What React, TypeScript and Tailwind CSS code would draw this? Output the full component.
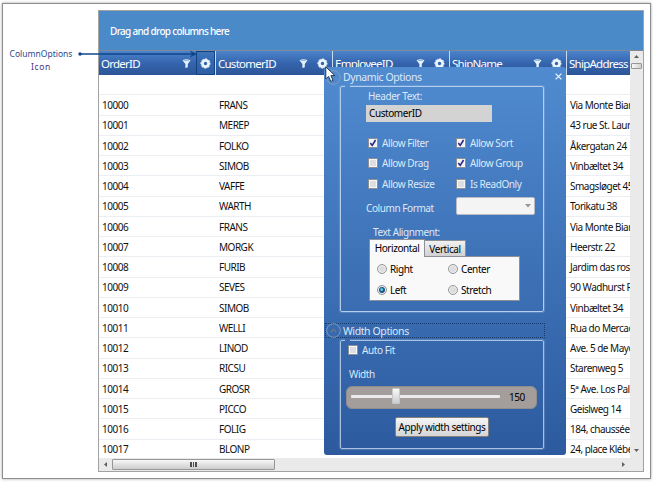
import React from "react";

const rows: [string, string, string][] = [
  ["10000", "FRANS", "Via Monte Bian"],
  ["10001", "MEREP", "43 rue St. Laur"],
  ["10002", "FOLKO", "Åkergatan 24"],
  ["10003", "SIMOB", "Vinbæltet 34"],
  ["10004", "VAFFE", "Smagsløget 45"],
  ["10005", "WARTH", "Torikatu 38"],
  ["10006", "FRANS", "Via Monte Bian"],
  ["10007", "MORGK", "Heerstr. 22"],
  ["10008", "FURIB", "Jardim das ros"],
  ["10009", "SEVES", "90 Wadhurst R"],
  ["10010", "SIMOB", "Vinbæltet 34"],
  ["10011", "WELLI", "Rua do Mercad"],
  ["10012", "LINOD", "Ave. 5 de Mayo"],
  ["10013", "RICSU", "Starenweg 5"],
  ["10014", "GROSR", "5ª Ave. Los Pal"],
  ["10015", "PICCO", "Geislweg 14"],
  ["10016", "FOLIG", "184, chaussée"],
  ["10017", "BLONP", "24, place Klébe"],
];

function Gear() {
  return (
    <svg className="h-[11px] w-[11px] shrink-0" viewBox="0 0 11 11">
      <circle cx="5.5" cy="5.5" r="3.1" fill="none" stroke="#eaf5fc" strokeWidth="2.8" />
      <circle cx="5.5" cy="5.5" r="4.7" fill="none" stroke="#eaf5fc" strokeWidth="1" strokeDasharray="2.1 1.59" strokeDashoffset="1.05" />
    </svg>
  );
}

function Funnel() {
  return (
    <svg className="h-[9px] w-[9px] shrink-0" viewBox="0 0 9 9">
      <path d="M0.5 1.2 Q4.5 -0.6 8.5 1.2 L5.8 5 V8.2 L3.4 9 V5 Z" fill="#e4f3fb" />
      <ellipse cx="4.5" cy="1.4" rx="2.8" ry="0.6" fill="#8fb8dc" />
    </svg>
  );
}

function HeaderCell({ label, active = false }: { label: string; active?: boolean }) {
  return (
    <div className="flex h-full w-[117px] shrink-0 items-center border-r border-[#c9dbf0] pl-[2px]">
      <span className="w-[81px] pt-[1px] text-[11.5px] leading-[16px] tracking-[-0.75px] whitespace-nowrap text-white">{label}</span>
      <Funnel />
      <div className={`ml-[5px] flex h-full w-[19px] items-center justify-center ${active ? "border border-[#12427f] bg-[#2f68b0]/50" : ""}`}>
        <Gear />
      </div>
    </div>
  );
}

function Check({ label, on = false, className = "" }: { label: string; on?: boolean; className?: string }) {
  return (
    <div className={`flex items-center whitespace-nowrap ${className}`}>
      <svg className="mr-[4px] h-[10px] w-[10px] shrink-0" viewBox="0 0 10 10">
        <rect x="0.5" y="0.5" width="9" height="9" fill="#f7f7f7" stroke="#8c8f94" />
        <rect x="2" y="2" width="6" height="6" fill={on ? "#f0f0f5" : "#dcdee2"} />
        {on && <path d="M2.3 5 L4.2 7.4 L7.6 2" fill="none" stroke="#272b86" strokeWidth="1.6" />}
      </svg>
      <span>{label}</span>
    </div>
  );
}

function Radio({ label, on = false, className = "" }: { label: string; on?: boolean; className?: string }) {
  return (
    <div className={`flex items-center whitespace-nowrap ${className}`}>
      <svg className="mr-[3px] h-[10px] w-[10px] shrink-0" viewBox="0 0 10 10">
        <circle cx="5" cy="5" r="4.5" fill="#ececec" stroke="#8a8d91" strokeWidth="0.9" />
        <circle cx="5" cy="5" r="3" fill={on ? "#1c5680" : "#dddddd"} />
        {on && <circle cx="4.7" cy="4.5" r="1.5" fill="#5ec4ea" />}
      </svg>
      <span>{label}</span>
    </div>
  );
}

function Disclosure({ arrow = false }: { arrow?: boolean }) {
  return (
    <svg className="h-[15px] w-[15px] shrink-0" viewBox="0 0 15 15">
      <circle cx="7.5" cy="7.5" r="6.8" fill="none" stroke="#8b9fba" strokeWidth="0.9" />
      {arrow && <path d="M4.8 9 L7.5 6.2 L10.2 9" fill="none" stroke="#68758a" strokeWidth="1.3" />}
    </svg>
  );
}

function OptionsPanel() {
  return (
    <div className="absolute top-[67px] left-[324px] h-[388px] w-[242px] rounded-[3px] bg-linear-to-b from-[#508bd0] to-[#2d5a9f] text-[10px] leading-[14px] tracking-[-0.42px] text-[#dce9f8]">
      <div className="flex h-[20px] items-center pr-[4px] pl-[2px]">
        <Disclosure />
        <span className="ml-[2px] flex-1 text-[10.5px] tracking-[-0.4px]">Dynamic Options</span>
        <svg className="-mt-[2px] h-[7px] w-[7px]" viewBox="0 0 7 7">
          <path d="M0.6 0.6 L6.4 6.4 M6.4 0.6 L0.6 6.4" stroke="#e9f2fb" strokeWidth="1.3" />
        </svg>
      </div>

      <div className="relative -mt-[1px] ml-[16px] h-[226px] w-[204px] rounded-[2px] border border-[#b4cdea] pl-[25px] shadow-[0_0_1px_1px_#a4c0e350]">
        <div className="absolute -top-[2px] left-[4px] h-[3px] w-[5px] bg-[#4f8ace]" />
        <div className="mt-[2px] ml-[2px]">Header Text:</div>
        <div className="mt-[2px] flex h-[17px] w-[126px] items-center bg-[#d3d3d3] pb-[1px] pl-[3px] text-black">CustomerID</div>
        <div className="mt-[11px] ml-[2px] grid grid-cols-[88px_100px]">
          <Check className="h-[20.3px]" label="Allow Filter" on />
          <Check className="h-[20.3px]" label="Allow Sort" on />
          <Check className="h-[20.3px]" label="Allow Drag" />
          <Check className="h-[20.3px]" label="Allow Group" on />
          <Check className="h-[20.3px]" label="Allow Resize" />
          <Check className="h-[20.3px]" label="Is ReadOnly" />
        </div>
        <div className="mt-[3px] flex h-[19px] items-center">
          <span className="w-[90px] pt-[3px]">Column Format</span>
          <div className="flex h-[18px] w-[79px] items-center justify-end rounded-[2px] border border-[#b9bdc3] bg-[#f4f4f4] pr-[3px]">
            <svg className="h-[4px] w-[6px]" viewBox="0 0 6 4">
              <path d="M0 0 H6 L3 3.6 Z" fill="#969696" />
            </svg>
          </div>
        </div>
        <div className="mt-[9px] ml-[7px]">Text Alignment:</div>
        <div className="ml-[3px] flex h-[17px] items-end text-black">
          <div className="z-10 -mb-[1px] flex h-[18px] w-[56px] items-center justify-center border border-b-0 border-[#8c9198] bg-[#f9f9f9]">Horizontal</div>
          <div className="flex h-[16px] w-[41px] items-center justify-center border border-b-0 border-l-0 border-[#8c9198] bg-linear-to-b from-[#f1f1f1] to-[#d1d1d1] pt-[2px]">Vertical</div>
        </div>
        <div className="ml-[3px] grid h-[45px] w-[151px] grid-cols-[71px_70px] content-center border border-[#8c9198] bg-[#f9f9f9] pt-[2px] pl-[7px] text-black">
          <Radio className="h-[20.5px]" label="Right" />
          <Radio className="h-[20.5px]" label="Center" />
          <Radio className="h-[20.5px]" label="Left" on />
          <Radio className="h-[20.5px]" label="Stretch" />
        </div>
      </div>

      <div className="mt-[11px] ml-[1px] flex h-[15px] w-[220px] items-center border border-dotted border-[#173c70]">
        <Disclosure arrow />
        <span className="ml-[2px] pt-[1px] text-[10.5px] tracking-[-0.4px]">Width Options</span>
      </div>

      <div className="relative mt-[2px] ml-[16px] h-[109px] w-[204px] rounded-[2px] border border-[#a9c2e2] pl-[6px] shadow-[0_0_1px_1px_#9fb9dc50]">
        <div className="absolute -top-[2px] left-[4px] h-[3px] w-[5px] bg-[#3768ac]" />
        <Check className="mt-[1px] ml-[1px] h-[15px]" label="Auto Fit" />
        <div className="mt-[10px] ml-[2px]">Width</div>
        <div className="mt-[5px] -ml-[1px] flex h-[23px] w-[191px] items-center rounded-[6px] border border-[#918e8d] bg-[#a39e9b] pl-[4px]">
          <div className="-mt-[3px] flex h-[17px] w-[149px] items-center">
            <div className="h-[3px] w-[41px] rounded-l-[1px] bg-[#eceaea]" />
            <div className="h-[16px] w-[8px] rounded-[1px] border border-[#c8c8c8] bg-linear-to-b from-[#fafafa] to-[#c9cbcd]" />
            <div className="h-[3px] flex-1 rounded-r-[1px] bg-[#eceaea]" />
          </div>
          <span className="-mt-[2px] ml-[9px] text-black">150</span>
        </div>
        <div className="mt-[8px] ml-[48px] flex h-[20px] w-[94px] items-center justify-center rounded-[2px] border border-[#85817d] bg-linear-to-b from-[#f5f5f5] to-[#d5d5d5] whitespace-nowrap text-black">Apply width settings</div>
      </div>
    </div>
  );
}

function DataGrid() {
  return (
    <div className="mt-[6px] ml-[95px] flex h-[462px] w-[546px] flex-col border border-[#a2a2a2] bg-white">
      <div className="flex h-[39px] shrink-0 items-center bg-[#4b8ac9] pt-[2px] pl-[11px] text-[10px] font-medium tracking-[-0.68px] text-white">Drag and drop columns here</div>
      <div className="flex h-[408px] shrink-0 border-t border-[#7e8a98]">
        <div className="h-full w-[531px] overflow-hidden">
          <div className="flex h-[24px] w-[600px] bg-linear-to-b from-[#4c83cb] via-[#3565ae] to-[#2c5598]">
            <HeaderCell label="OrderID" active />
            <HeaderCell label="CustomerID" />
            <HeaderCell label="EmployeeID" />
            <HeaderCell label="ShipName" />
            <HeaderCell label="ShipAddress" />
          </div>
          <div className="h-[20.4px] border-b border-[#ebeff4]" />
          {rows.map(([id, customer, address]) => (
            <div key={id} className="flex h-[20.25px] w-[680px] items-center border-b border-[#ebeff4] pl-[3px] text-[10px] leading-[14px] tracking-[-0.5px] whitespace-nowrap text-[#111]">
              <span className="w-[117px]">{id}</span>
              <span className="w-[351px]">{customer}</span>
              <span>{address}</span>
            </div>
          ))}
        </div>
        <div className="flex w-[13px] flex-col items-center bg-[#eaeaea] pt-[4px]">
          <svg className="h-[3px] w-[5px]" viewBox="0 0 5 3"><path d="M0 3 L2.5 0 L5 3Z" fill="#606060" /></svg>
          <div className="mt-[5px] h-[6px] w-[11px] rounded-[1px] border border-[#969696] bg-linear-to-r from-[#f6f6f6] to-[#d1d1d1]" />
          <svg className="mt-auto mb-[6px] h-[3px] w-[5px]" viewBox="0 0 5 3"><path d="M0 0 L2.5 3 L5 0Z" fill="#606060" /></svg>
        </div>
      </div>
      <div className="flex h-[13px] items-center bg-[#eaeaea]">
        <svg className="ml-[5px] h-[5px] w-[3px]" viewBox="0 0 3 5"><path d="M3 0 L0 2.5 L3 5Z" fill="#606060" /></svg>
        <div className="ml-[5px] flex h-[11px] w-[163px] items-center justify-center gap-[1px] rounded-[1px] border border-[#979797] bg-linear-to-b from-[#f7f7f7] to-[#cdcdcd]">
          <i className="h-[5px] w-[1.5px] bg-[#4d4d4d]" />
          <i className="h-[5px] w-[1.5px] bg-[#4d4d4d]" />
          <i className="h-[5px] w-[1.5px] bg-[#4d4d4d]" />
        </div>
        <svg className="mr-[18px] ml-auto h-[5px] w-[3px]" viewBox="0 0 3 5"><path d="M0 0 L3 2.5 L0 5Z" fill="#606060" /></svg>
      </div>
    </div>
  );
}

export default function App() {
  return (
    <div className="relative h-[482px] w-[653px] overflow-hidden bg-white pt-[3px] pl-[2px] font-['Noto_Sans','Open_Sans',sans-serif]">
      <div className="h-[476px] w-[649px] border border-[#8d8d8d] bg-white shadow-[0_0_3px_#aaa]">
        <DataGrid />
      </div>
      <div className="absolute top-[48px] left-[4px] w-[74px] text-center text-[8.5px] leading-[12.5px] text-[#2b4a8c]">
        <div>ColumnOptions</div>
        <div className="tracking-[0.6px] text-[#48307f]">Icon</div>
      </div>
      <svg className="absolute top-[49px] left-[78px] h-[10px] w-[120px]" viewBox="0 0 120 10">
        <path d="M2 5 H114" stroke="#0d478b" strokeWidth="1.6" />
        <circle cx="2" cy="5" r="1.7" fill="#0d478b" />
        <path d="M112 1.5 L119 5 L112 8.5 L114 5 Z" fill="#0d478b" />
      </svg>
      <OptionsPanel />
      <svg className="absolute top-[66px] left-[325px] h-[17px] w-[11px]" viewBox="0 0 11 17">
        <path d="M0.8 0.8 V13 L3.6 10.4 L5.8 15.4 L8 14.4 L5.9 9.6 H9.8 Z" fill="white" stroke="#1c2a40" strokeWidth="0.9" />
      </svg>
    </div>
  );
}
